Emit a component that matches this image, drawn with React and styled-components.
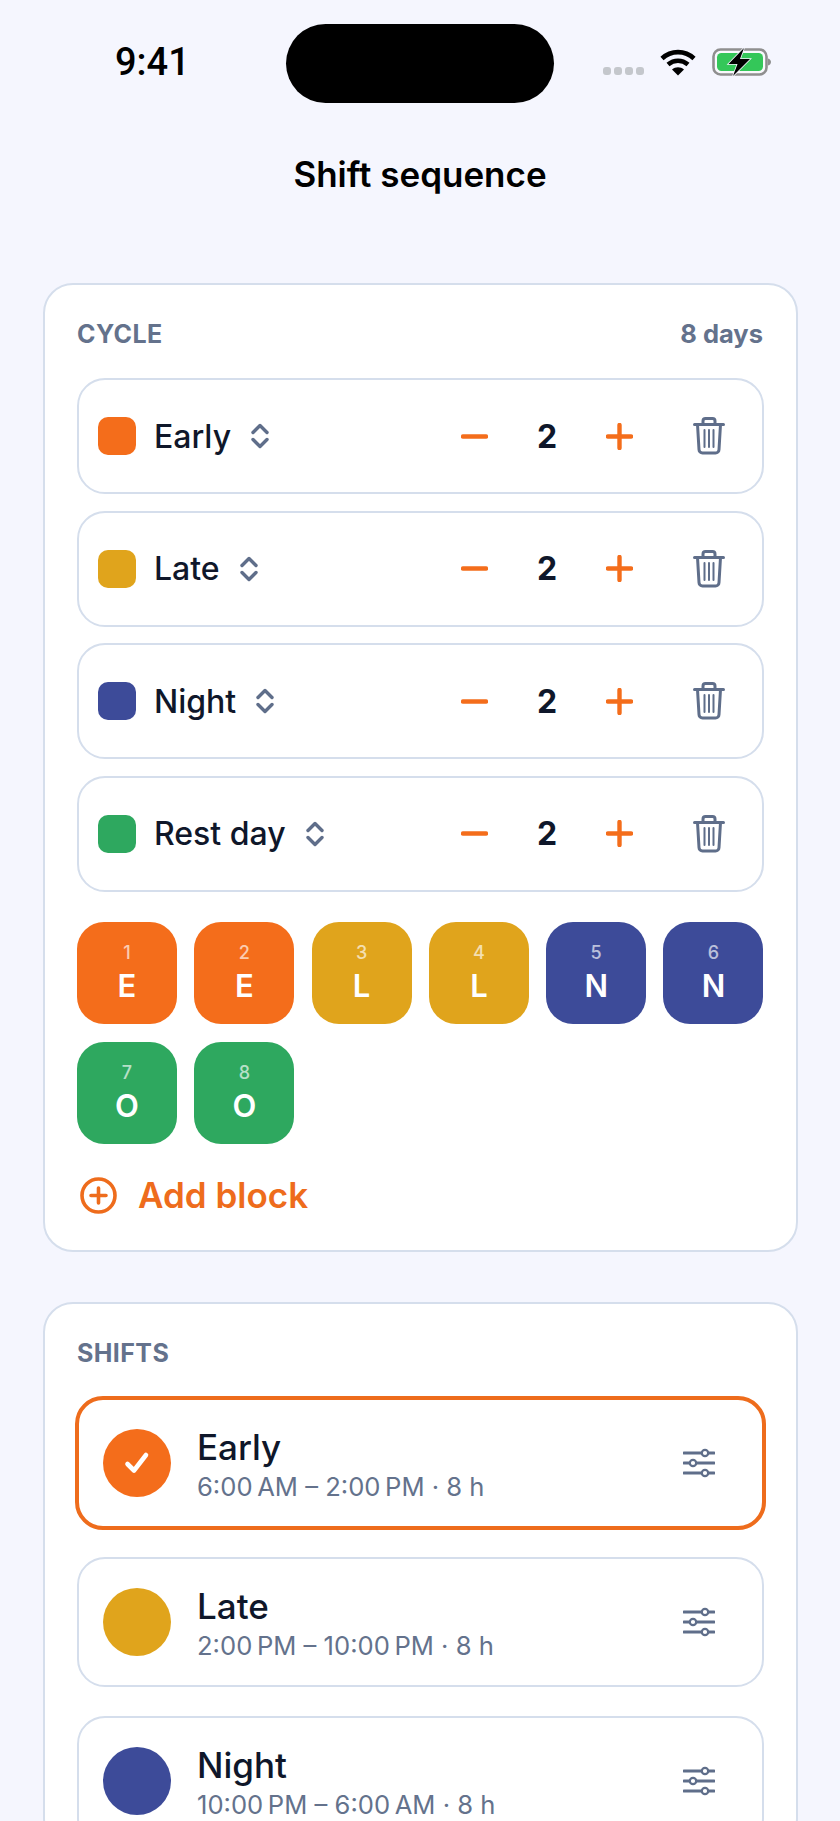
import styled, {createGlobalStyle} from "styled-components"

const GlobalStyle = createGlobalStyle`
    html, body {
        margin: 0;
        padding: 0;
        background: #f5f6fe;
    }
    * {
        box-sizing: border-box;
    }
`

const Page = styled.div`
    width: 840px;
    height: 1821px;
    overflow: hidden;
    background: #f5f6fe;
    font-family: Inter, "Liberation Sans", sans-serif;
    color: #0f172a;
    display: flex;
    flex-direction: column;
`

const StatusBar = styled.div`
    height: 102px;
    margin-top: 24px;
    flex: none;
    position: relative;
    display: flex;
    justify-content: center;
`

const Time = styled.div`
    position: absolute;
    left: 115px;
    top: 18px;
    font-family: Roboto, "Liberation Sans", sans-serif;
    font-size: 38px;
    line-height: 40px;
    font-weight: 500;
    color: #000;
`

const Island = styled.div`
    width: 268px;
    height: 79px;
    border-radius: 39.5px;
    background: #000;
`

const StatusIcons = styled.div`
    position: absolute;
    left: 603px;
    top: 24px;
    display: flex;
    align-items: flex-end;
`

const Signal = styled.div`
    display: flex;
    gap: 3px;
    margin-right: 16px;
    margin-bottom: 1px;
`

const SignalDot = styled.div`
    width: 8px;
    height: 8px;
    border-radius: 3px;
    background: #c4c7cc;
`

const Title = styled.h1`
    margin: 23px 0 0;
    height: 50px;
    flex: none;
    text-align: center;
    font-size: 35px;
    line-height: 50px;
    font-weight: 600;
    color: #000;
`

const Card = styled.section`
    flex: none;
    margin: ${({$top}) => $top}px 42px 0 43px;
    width: 755px;
    padding: 32px 32px 0 32px;
    height: ${({$height}) => $height ? `${$height}px` : "auto"};
    background: #fff;
    border: 2px solid #d5deec;
    border-radius: 30px;
`

const CardHead = styled.div`
    display: flex;
    justify-content: space-between;
    align-items: center;
    height: 34px;
    margin-bottom: ${({$gap}) => $gap}px;
`

const SectionLabel = styled.div`
    font-size: 25px;
    line-height: 34px;
    font-weight: 700;
    letter-spacing: 0.4px;
    color: #64728c;
`

const DayCount = styled.div`
    margin-right: 1px;
    font-size: 25.5px;
    line-height: 34px;
    font-weight: 700;
    color: #64728c;
`

const BlockList = styled.div`
    display: flex;
    flex-direction: column;
    gap: 16.5px;
`

const BlockRow = styled.div`
    height: 116px;
    padding: 0 37px 0 19px;
    display: flex;
    align-items: center;
    border: 2px solid #d5deec;
    border-radius: 28px;
`

const Swatch = styled.div`
    width: 38px;
    height: 38px;
    border-radius: 10px;
    background: ${({$color}) => $color};
    margin-right: 18px;
`

const BlockName = styled.div`
    font-size: 32px;
    font-weight: 500;
    margin-right: 20px;
`

const Stepper = styled.div`
    margin-left: auto;
    display: grid;
    grid-template-columns: 27px 118px 27px;
    align-items: center;
    margin-right: 60px;
`

const Count = styled.div`
    text-align: center;
    font-size: 32px;
    font-weight: 700;
`

const Sequence = styled.div`
    margin-top: 30px;
    display: grid;
    grid-template-columns: repeat(6, 100px);
    column-gap: 17.3px;
    row-gap: 18px;
`

const DayTile = styled.div`
    height: 102px;
    padding-top: 21px;
    border-radius: 27px;
    background: ${({$color}) => $color};
    color: #fff;
    display: flex;
    flex-direction: column;
    align-items: center;
`

const DayNumber = styled.div`
    font-size: 18px;
    line-height: 20px;
    font-weight: 500;
    opacity: 0.65;
`

const DayLetter = styled.div`
    margin-top: 5px;
    font-size: 31px;
    line-height: 36px;
    font-weight: 600;
`

const AddBlock = styled.div`
    margin-top: 33px;
    margin-left: 3px;
    display: flex;
    align-items: center;
    gap: 21px;
    height: 37px;
    font-size: 35px;
    font-weight: 600;
    color: #ee6c1c;
`

const ShiftList = styled.div`
    display: flex;
    flex-direction: column;
    gap: 29px;
`

const ShiftRow = styled.div`
    height: ${({$selected}) => $selected ? 134 : 130}px;
    margin: ${({$selected}) => $selected ? "-2px" : "0"};
    padding: 0 47px 0 24px;
    display: flex;
    align-items: center;
    border: ${({$selected}) => $selected ? "4px solid #ee6c1c" : "2px solid #d5deec"};
    border-radius: 28px;
`

const ShiftDot = styled.div`
    width: 68px;
    height: 68px;
    flex: none;
    border-radius: 50%;
    background: ${({$color}) => $color};
    display: flex;
    align-items: center;
    justify-content: center;
`

const ShiftText = styled.div`
    margin-left: 26px;
    padding-top: 1px;
    flex: 1;
`

const ShiftName = styled.div`
    font-size: 35px;
    line-height: 42px;
    font-weight: 500;
`

const ShiftTime = styled.div`
    margin-top: 5px;
    font-size: 25.6px;
    line-height: 28px;
    color: #64728c;
`

const Chevrons = () => (
    <svg width="18" height="26" viewBox="0 0 18 26" fill="none" stroke="#5f6e8a" strokeWidth="3.4" strokeLinecap="round" strokeLinejoin="round">
        <path d="M2 9.5 9 2.5l7 7" />
        <path d="M2 16.5l7 7 7-7" />
    </svg>
)

const Minus = () => (
    <svg width="27" height="27" viewBox="0 0 27 27" stroke="#f46d1b" strokeWidth="4.4" strokeLinecap="round">
        <path d="M2 13.5h23" />
    </svg>
)

const Plus = () => (
    <svg width="27" height="27" viewBox="0 0 27 27" stroke="#f46d1b" strokeWidth="4.4" strokeLinecap="round">
        <path d="M2 13.5h23M13.5 2v23" />
    </svg>
)

const Trash = () => (
    <svg width="32" height="38" viewBox="0 0 32 38" fill="none" stroke="#5f6e8a" strokeWidth="3" strokeLinecap="round" strokeLinejoin="round">
        <path d="M1.5 7.5h29" />
        <path d="M10 7V4a2.500 2.500 0 0 1 2.500-2.500h7A2.500 2.500 0 0 1 22 4v3" />
        <path d="M4.500 7.500 6 32.500A3.500 3.500 0 0 0 9.500 36h13a3.500 3.500 0 0 0 3.500-3.500l1.500-25" />
        <path d="M11.500 13v17M16 13v17M20.500 13v17" strokeWidth="2" />
    </svg>
)

const CirclePlus = () => (
    <svg width="37" height="37" viewBox="0 0 37 37" fill="none" stroke="#ee6c1c" strokeWidth="3.6" strokeLinecap="round">
        <circle cx="18.500" cy="18.500" r="16.500" />
        <path d="M11 18.500h15M18.500 11v15" />
    </svg>
)

const Check = () => (
    <svg width="26" height="24" viewBox="0 0 26 24" fill="none" stroke="#fff" strokeWidth="4.600" strokeLinecap="round" strokeLinejoin="round">
        <path d="M3.500 13 10 19.500 22 4" />
    </svg>
)

const Sliders = () => (
    <svg width="32" height="30" viewBox="0 0 32 30" fill="none" stroke="#5f6e8a" strokeWidth="3" strokeLinecap="round">
        <path d="M1 5h30M1 15h30M1 25h30" />
        <circle cx="22" cy="5" r="3.200" fill="#fff" strokeWidth="2.200" />
        <circle cx="10" cy="15" r="3.200" fill="#fff" strokeWidth="2.200" />
        <circle cx="22" cy="25" r="3.200" fill="#fff" strokeWidth="2.200" />
    </svg>
)

const Wifi = () => (
    <svg width="36" height="27" viewBox="0 0 36 27" fill="none" stroke="#000" strokeWidth="4.600">
        <path d="M2 9.500C11 1 25 1 34 9.500" />
        <path d="M8 15.500c6-5 14-5 20 0" />
        <path d="M18 26.500 12 20.500c3.500-3 8.500-3 12 0z" fill="#000" stroke="none" />
    </svg>
)

const BatteryIcon = styled.svg`
    margin-left: 16px;
`

const Battery = () => (
    <BatteryIcon width="59" height="28" viewBox="0 0 59 28">
        <rect x="1.500" y="1.500" width="53" height="25" rx="7" fill="#f8f8fc" stroke="#8f8f8f" strokeWidth="2.600" />
        <rect x="5" y="5" width="46" height="18" rx="4.500" fill="#34c759" />
        <path d="M56 10.500c2 .5 3 2 3 3.500s-1 3-3 3.500z" fill="#8f8f8f" />
        <path d="M32 0 16.500 16h9l-4.500 12 17-17h-10z" fill="#000" stroke="#f5f6fe" strokeWidth="1.600" paintOrder="stroke" />
    </BatteryIcon>
)

const COLORS = {
    early: "#f46d1b",
    late: "#e0a41c",
    night: "#3d4b99",
    rest: "#2ea85f",
}

const blocks = [
    {name: "Early", color: COLORS.early},
    {name: "Late", color: COLORS.late},
    {name: "Night", color: COLORS.night},
    {name: "Rest day", color: COLORS.rest},
]

const days = [
    {letter: "E", color: COLORS.early},
    {letter: "E", color: COLORS.early},
    {letter: "L", color: COLORS.late},
    {letter: "L", color: COLORS.late},
    {letter: "N", color: COLORS.night},
    {letter: "N", color: COLORS.night},
    {letter: "O", color: COLORS.rest},
    {letter: "O", color: COLORS.rest},
]

const shifts = [
    {name: "Early", time: "6:00\u202fAM – 2:00\u202fPM · 8 h", color: COLORS.early, selected: true},
    {name: "Late", time: "2:00\u202fPM – 10:00\u202fPM · 8 h", color: COLORS.late},
    {name: "Night", time: "10:00\u202fPM – 6:00\u202fAM · 8 h", color: COLORS.night},
]

export default function App() {
    return (
        <Page>
            <GlobalStyle />
            <StatusBar>
                <Time>9:41</Time>
                <Island />
                <StatusIcons>
                    <Signal>
                        <SignalDot />
                        <SignalDot />
                        <SignalDot />
                        <SignalDot />
                    </Signal>
                    <Wifi />
                    <Battery />
                </StatusIcons>
            </StatusBar>

            <Title>Shift sequence</Title>

            <Card $top={84} $height={969}>
                <CardHead $gap={27}>
                    <SectionLabel>CYCLE</SectionLabel>
                    <DayCount>8 days</DayCount>
                </CardHead>
                <BlockList>
                    {blocks.map((block) => (
                        <BlockRow key={block.name}>
                            <Swatch $color={block.color} />
                            <BlockName>{block.name}</BlockName>
                            <Chevrons />
                            <Stepper>
                                <Minus />
                                <Count>2</Count>
                                <Plus />
                            </Stepper>
                            <Trash />
                        </BlockRow>
                    ))}
                </BlockList>
                <Sequence>
                    {days.map((day, i) => (
                        <DayTile key={i} $color={day.color}>
                            <DayNumber>{i + 1}</DayNumber>
                            <DayLetter>{day.letter}</DayLetter>
                        </DayTile>
                    ))}
                </Sequence>
                <AddBlock>
                    <CirclePlus />
                    Add block
                </AddBlock>
            </Card>

            <Card $top={50}>
                <CardHead $gap={28}>
                    <SectionLabel>SHIFTS</SectionLabel>
                </CardHead>
                <ShiftList>
                    {shifts.map((shift) => (
                        <ShiftRow key={shift.name} $selected={shift.selected}>
                            <ShiftDot $color={shift.color}>
                                {shift.selected && <Check />}
                            </ShiftDot>
                            <ShiftText>
                                <ShiftName>{shift.name}</ShiftName>
                                <ShiftTime>{shift.time}</ShiftTime>
                            </ShiftText>
                            <Sliders />
                        </ShiftRow>
                    ))}
                </ShiftList>
            </Card>
        </Page>
    )
}
